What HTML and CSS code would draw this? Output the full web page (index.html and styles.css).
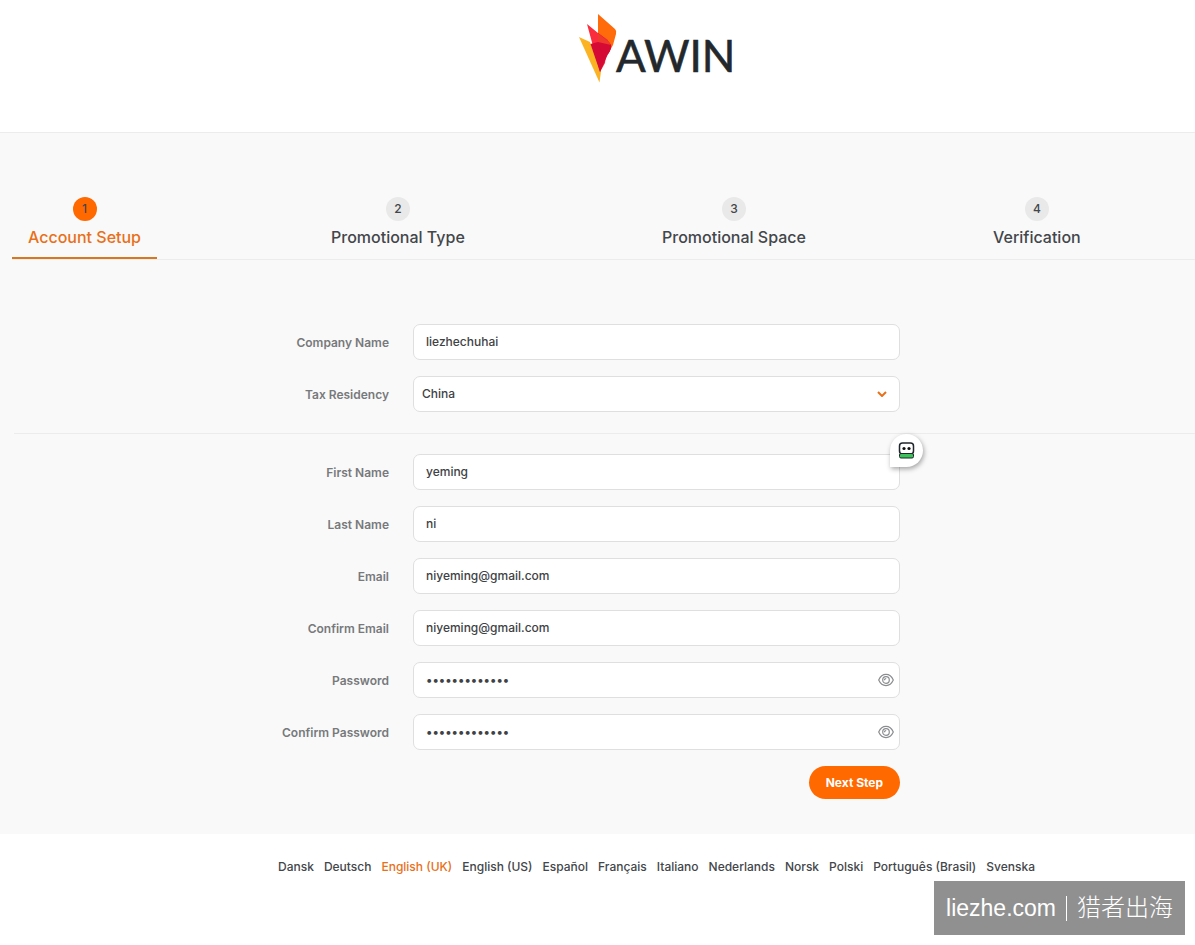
FILE: index.html
```html
<!DOCTYPE html>
<html lang="en">
<head>
    <meta charset="UTF-8">
    <meta name="viewport" content="width=device-width, initial-scale=1">
    <title>Awin - Account Setup</title>
    <link rel="stylesheet" href="styles.css">
</head>
<body>
    <header class="header">
        <svg class="logo" width="160" height="72" viewBox="0 0 160 72" role="img" aria-label="AWIN">
            <path fill="#fbb324" d="M2 24 13 29 24 58 22.500 69.500z"/>
            <path fill="#ff6b0a" d="M21 1 38 16Q40 18 39 21L36 32 31 41 21 26z"/>
            <path fill="#fb2c3c" d="M10 11 21 20 31 27 28 50 23 59z"/>
            <path fill="#d50a35" d="M13.500 31 21 29 34 31Q35 36 31 41L23 59z"/>
            <path fill="#d50a35" d="M21 20 32 29Q36 34 31 41L27 45 21 30z"/>
            <path fill="#ee3a2c" d="M21 20 32 29 34 32 21 29z"/>
            <text class="logo-text" x="39" y="59">AWIN</text>
        </svg>
    </header>

    <main class="signup">
        <ol class="steps">
            <li class="step active"><span class="step-number">1</span>Account Setup</li>
            <li class="step"><span class="step-number">2</span>Promotional Type</li>
            <li class="step"><span class="step-number">3</span>Promotional Space</li>
            <li class="step"><span class="step-number">4</span>Verification</li>
        </ol>

        <form class="form" action="#" method="post">
            <div class="group">
                <div class="row">
                    <label for="company">Company Name</label>
                    <div class="field"><input type="text" id="company" name="company" value="liezhechuhai"></div>
                </div>
                <div class="row">
                    <label for="residency">Tax Residency</label>
                    <div class="field">
                        <select id="residency" name="residency">
                            <option selected>China</option>
                        </select>
                        <svg class="chevron" width="10" height="6" viewBox="0 0 10 6" aria-hidden="true"><path d="M1 1l4 4 4-4"/></svg>
                    </div>
                </div>
            </div>
            <div class="group">
                <div class="row">
                    <label for="first">First Name</label>
                    <div class="field">
                        <input type="text" id="first" name="first" value="yeming">
                        <button type="button" class="autofill" aria-label="Autofill">
                            <svg width="17" height="17" viewBox="0 0 17 17" aria-hidden="true">
                                <rect x="1.500" y="1" width="14" height="11" rx="3" fill="#fff" stroke="#20262c" stroke-width="1.500"/>
                                <rect x="1.500" y="11.500" width="14" height="4.500" rx="1.500" fill="#3cc25b" stroke="#20262c"/>
                                <circle cx="6" cy="6.500" r="1.600" fill="#111"/>
                                <circle cx="11" cy="6.500" r="1.600" fill="#111"/>
                            </svg>
                        </button>
                    </div>
                </div>
                <div class="row">
                    <label for="last">Last Name</label>
                    <div class="field"><input type="text" id="last" name="last" value="ni"></div>
                </div>
                <div class="row">
                    <label for="email">Email</label>
                    <div class="field"><input type="email" id="email" name="email" value="niyeming@gmail.com"></div>
                </div>
                <div class="row">
                    <label for="email2">Confirm Email</label>
                    <div class="field"><input type="email" id="email2" name="email2" value="niyeming@gmail.com"></div>
                </div>
                <div class="row">
                    <label for="password">Password</label>
                    <div class="field">
                        <input type="password" id="password" name="password" value="passwordawin1">
                        <button type="button" class="reveal" aria-label="Show password">
                            <svg width="16" height="14" viewBox="0 0 16 14" aria-hidden="true"><path d="M.7 7C4 -.4 12 -.4 15.3 7 12 14.4 4 14.4.7 7z"/><circle cx="8" cy="7" r="3.3"/><path d="M6.5 7.2A1.6 1.6 0 0 1 8.2 5.5"/></svg>
                        </button>
                    </div>
                </div>
                <div class="row">
                    <label for="password2">Confirm Password</label>
                    <div class="field">
                        <input type="password" id="password2" name="password2" value="passwordawin1">
                        <button type="button" class="reveal" aria-label="Show confirmed password">
                            <svg width="16" height="14" viewBox="0 0 16 14" aria-hidden="true"><path d="M.7 7C4 -.4 12 -.4 15.3 7 12 14.4 4 14.4.7 7z"/><circle cx="8" cy="7" r="3.3"/><path d="M6.5 7.2A1.6 1.6 0 0 1 8.2 5.5"/></svg>
                        </button>
                    </div>
                </div>
                <div class="row">
                    <div class="actions"><button type="submit" class="next">Next Step</button></div>
                </div>
            </div>
        </form>
    </main>

    <footer class="languages">
        <a href="#">Dansk</a>
        <a href="#">Deutsch</a>
        <a href="#" class="current">English (UK)</a>
        <a href="#">English (US)</a>
        <a href="#">Español</a>
        <a href="#">Français</a>
        <a href="#">Italiano</a>
        <a href="#">Nederlands</a>
        <a href="#">Norsk</a>
        <a href="#">Polski</a>
        <a href="#">Português (Brasil)</a>
        <a href="#">Svenska</a>
    </footer>

    <div class="watermark"><span class="site">liezhe.com</span><span class="bar"></span><span lang="zh">猎者出海</span></div>
</body>
</html>
```
FILE: styles.css
```css
* {
    box-sizing: border-box;
}
body {
    margin: 0;
    background-color: #fff;
    color: #43464a;
    font-family: Inter, sans-serif;
    font-size: 13px;
    line-height: 20px;
}
.header {
    display: flex;
    justify-content: center;
    padding: 13px 0 47px 119px;
    border-bottom: 1px solid #ececec;
}
.logo {
    display: block;
}
.logo-text {
    font-family: Lato, sans-serif;
    font-size: 44px;
    fill: #22282b;
    stroke: #22282b;
    stroke-width: 0.6px;
}
.signup {
    background-color: #f9f9f9;
    padding: 64px 0 35px 12px;
}

/* steps */
.steps {
    display: grid;
    grid-template-columns: 303fr 331fr 331fr 218fr;
    justify-items: start;
    list-style: none;
    margin: 0;
    padding: 0;
    border-bottom: 1px solid #ececec;
}
.step {
    display: flex;
    flex-direction: column;
    align-items: center;
    gap: 6px;
    padding: 0 16px 10px;
    border-bottom: 2px solid transparent;
    font-size: 16px;
    font-weight: 500;
    line-height: 20px;
}
.step.active {
    color: #e8701a;
    border-color: #d9771f;
}
.step-number {
    width: 24px;
    height: 24px;
    border-radius: 50%;
    background-color: #e9e9e9;
    color: #43464a;
    font-size: 12px;
    line-height: 24px;
    text-align: center;
}
.active .step-number {
    background-color: #ff6900;
}

/* form */
.form {
    padding-top: 64px;
}
.group {
    display: flex;
    flex-direction: column;
    gap: 16px;
    margin-left: 2px;
    padding-left: 104px;
}
.group + .group {
    position: relative;
    margin-top: 21px;
    padding-top: 21px;
}
.group + .group::before {
    content: "";
    position: absolute;
    top: 0;
    left: 0;
    right: 0;
    border-top: 1px solid #ececec;
}
.row {
    display: grid;
    grid-template-columns: 1fr minmax(0, 487px) 1fr;
    align-items: center;
}
.row label {
    padding-top: 2px;
    padding-right: 24px;
    color: #77797c;
    font-size: 12px;
    font-weight: 600;
    text-align: right;
}
.field {
    position: relative;
}
.field input,
.field select {
    display: block;
    width: 100%;
    height: 36px;
    padding: 0 12px 2px;
    border: 1px solid #dfdfdf;
    border-radius: 7px;
    background-color: #fff;
    color: #3e4245;
    font-family: inherit;
    font-size: 12px;
    font-weight: 500;
}
.field select {
    appearance: none;
    padding: 0 8px 2px;
}
.chevron {
    position: absolute;
    top: 15px;
    right: 13px;
    fill: none;
    stroke: #e8701a;
    stroke-width: 2;
    pointer-events: none;
}
.reveal {
    position: absolute;
    top: 11px;
    right: 6px;
    padding: 0;
    border: 0;
    background: none;
    cursor: pointer;
}
.reveal svg {
    display: block;
    fill: none;
    stroke: #8a8d90;
    stroke-width: 1.2;
}
.autofill {
    position: absolute;
    top: -20px;
    right: -23px;
    display: flex;
    align-items: center;
    justify-content: center;
    width: 33px;
    height: 33px;
    padding: 0;
    border: 0;
    border-radius: 50% 50% 50% 0;
    background-color: #fff;
    box-shadow: 1px 2px 5px rgba(0, 0, 0, 0.35);
    cursor: pointer;
}
.actions {
    grid-column: 2;
    display: flex;
    justify-content: flex-end;
}
.next {
    height: 33px;
    padding: 0 17px;
    border: 0;
    border-radius: 17px;
    background-color: #ff6900;
    color: #fff;
    font-family: inherit;
    font-size: 12px;
    font-weight: 700;
    cursor: pointer;
}

/* footer */
.languages {
    display: flex;
    flex-wrap: wrap;
    justify-content: center;
    gap: 10px;
    padding: 23px 0 68px 118px;
    font-size: 12px;
    font-weight: 500;
}
.languages a {
    color: #43464a;
    text-decoration: none;
}
.languages .current {
    color: #e8701a;
}
.watermark {
    position: fixed;
    right: 10px;
    bottom: 10px;
    display: flex;
    align-items: center;
    gap: 10px;
    height: 54px;
    padding: 0 12px;
    background-color: #909090;
    color: #fff;
    font-family: "Liberation Sans", "Noto Sans CJK SC", sans-serif;
    font-size: 24px;
    font-weight: 300;
}
.site {
    font-size: 23px;
}
.bar {
    width: 1px;
    height: 25px;
    background-color: #fff;
}
```
